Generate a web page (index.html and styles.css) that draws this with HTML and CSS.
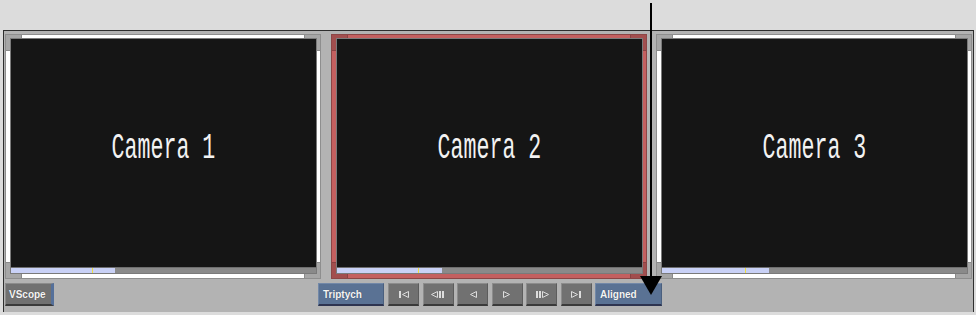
FILE: index.html
```html
<!DOCTYPE html>
<html lang="en">
<head>
  <meta charset="UTF-8" />
  <title>Triptych Viewer</title>
  <link rel="stylesheet" href="styles.css">
</head>
<body>
  <div class="panel">
    <div class="viewers">
      <div class="viewer">
        <div class="screen">
          <div class="picture"><span class="label">Camera 1</span></div>
          <div class="scrub">
            <div class="scrub-fill" style="width:34%"></div>
            <div class="scrub-tick" style="left:26.5%"></div>
          </div>
        </div>
      </div>

      <div class="viewer selected">
        <div class="screen">
          <div class="picture"><span class="label">Camera 2</span></div>
          <div class="scrub">
            <div class="scrub-fill" style="width:34.5%"></div>
            <div class="scrub-tick" style="left:26.5%"></div>
          </div>
        </div>
      </div>

      <div class="viewer">
        <div class="screen">
          <div class="picture"><span class="label">Camera 3</span></div>
          <div class="scrub">
            <div class="scrub-fill" style="width:35%"></div>
            <div class="scrub-tick" style="left:27.2%"></div>
          </div>
        </div>
      </div>
    </div>

    <div class="controls">
      <button class="btn gray vscope">VScope</button>

      <div class="transport">
        <button class="btn blue label-btn">Triptych</button>
        <!-- go to start -->
        <button class="btn gray icon-btn">
          <svg width="12" height="9" viewBox="0 0 12 9"><rect x="1" y="1" width="2" height="7"/><polygon points="10.5,1.5 4.5,4.5 10.5,7.5"/></svg>
        </button>
        <!-- step back -->
        <button class="btn gray icon-btn">
          <svg width="14" height="9" viewBox="0 0 14 9"><polygon points="6.5,1.5 0.5,4.5 6.5,7.5"/><rect x="8" y="1" width="2" height="7"/><rect x="11" y="1" width="2" height="7"/></svg>
        </button>
        <!-- play reverse -->
        <button class="btn gray icon-btn">
          <svg width="8" height="9" viewBox="0 0 8 9"><polygon points="7.5,1.5 1.5,4.5 7.5,7.5"/></svg>
        </button>
        <!-- play -->
        <button class="btn gray icon-btn">
          <svg width="8" height="9" viewBox="0 0 8 9"><polygon points="0.5,1.5 6.5,4.5 0.5,7.5"/></svg>
        </button>
        <!-- step forward -->
        <button class="btn gray icon-btn">
          <svg width="14" height="9" viewBox="0 0 14 9"><rect x="1" y="1" width="2" height="7"/><rect x="4" y="1" width="2" height="7"/><polygon points="7.5,1.5 13.5,4.5 7.5,7.5"/></svg>
        </button>
        <!-- go to end -->
        <button class="btn gray icon-btn">
          <svg width="12" height="9" viewBox="0 0 12 9"><polygon points="1.5,1.5 7.5,4.5 1.5,7.5"/><rect x="9" y="1" width="2" height="7"/></svg>
        </button>
        <button class="btn blue label-btn aligned">Aligned</button>
      </div>
    </div>
  </div>

  <div class="pointer"></div>
</body>
</html>
```

FILE: styles.css
```css
* {
  margin: 0;
  padding: 0;
  box-sizing: border-box;
}

body {
  width: 976px;
  height: 315px;
  background: #dcdcdc;
  font-family: 'Liberation Sans', Arial, sans-serif;
  overflow: hidden;
  position: relative;
}

.panel {
  margin: 30px 2px 0 3px;
  height: 282px;
  background: #b3b3b3;
  border: 1px solid #2e2e2e;
  border-bottom: none;
}

.viewers {
  display: flex;
  padding: 3px 0 0 1px;
}

/* corner blocks: a light 15px square over a darker 16px one gives the inner edge line */
.viewer {
  width: 316px;
  height: 245px;
  padding: 3px 3px 4px 4px;
  border: 1px solid #8e8e8e;
  background:
    linear-gradient(#a6a6a6, #a6a6a6) left top / 15px 15px no-repeat,
    linear-gradient(#a6a6a6, #a6a6a6) right top / 15px 15px no-repeat,
    linear-gradient(#a6a6a6, #a6a6a6) left bottom / 15px 15px no-repeat,
    linear-gradient(#a6a6a6, #a6a6a6) right bottom / 15px 15px no-repeat,
    linear-gradient(#8a8a8a, #8a8a8a) left top / 16px 16px no-repeat,
    linear-gradient(#8a8a8a, #8a8a8a) right top / 16px 16px no-repeat,
    linear-gradient(#8a8a8a, #8a8a8a) left bottom / 16px 16px no-repeat,
    linear-gradient(#8a8a8a, #8a8a8a) right bottom / 16px 16px no-repeat,
    #ffffff;
}

.viewer.selected {
  margin: 0 9px 0 10px;
  border-color: #8c4646;
  background:
    linear-gradient(#a24e4e, #a24e4e) left top / 15px 15px no-repeat,
    linear-gradient(#a24e4e, #a24e4e) right top / 15px 15px no-repeat,
    linear-gradient(#a24e4e, #a24e4e) left bottom / 15px 15px no-repeat,
    linear-gradient(#a24e4e, #a24e4e) right bottom / 15px 15px no-repeat,
    linear-gradient(#8a4242, #8a4242) left top / 16px 16px no-repeat,
    linear-gradient(#8a4242, #8a4242) right top / 16px 16px no-repeat,
    linear-gradient(#8a4242, #8a4242) left bottom / 16px 16px no-repeat,
    linear-gradient(#8a4242, #8a4242) right bottom / 16px 16px no-repeat,
    #c46060;
}

.screen {
  height: 100%;
  display: flex;
  flex-direction: column;
  background: #151515;
  border: 1px solid #7a7a7a;
}

.picture {
  flex: 1;
  display: flex;
  align-items: center;
  justify-content: center;
  padding-bottom: 10px;
}

.label {
  font-family: 'Liberation Mono', 'DejaVu Sans Mono', monospace;
  font-size: 36px;
  color: #f2f2f2;
  transform: scaleX(0.6);
  white-space: nowrap;
}

.scrub {
  height: 6px;
  position: relative;
  background: #8a8a8a;
  border-top: 1px solid #6e6e6e;
}

.scrub-fill {
  height: 100%;
  background: #c9d1f6;
}

.scrub-tick {
  position: absolute;
  top: 0;
  width: 1px;
  height: 100%;
  background: #f0e040;
}

.controls {
  display: flex;
  margin-top: 4px;
  padding-left: 1px;
}

.transport {
  display: flex;
  gap: 3.5px;
  margin-left: 264px;
}

.btn {
  height: 23px;
  font-family: 'Liberation Sans', Arial, sans-serif;
  font-size: 10px;
  font-weight: bold;
  color: #f4f4f4;
  text-shadow: 0 0 1px rgba(0, 0, 0, 0.4);
  cursor: pointer;
  display: flex;
  align-items: center;
}

.btn.gray {
  background: #717171;
  border-top: 1px solid #8c8c8c;
  border-left: 1px solid #8c8c8c;
  border-right: 1px solid #5c5c5c;
  border-bottom: 2px solid #3a3a3a;
}

.btn.blue {
  background: #5a7294;
  border-top: 1px solid #7288a8;
  border-left: 1px solid #7288a8;
  border-right: 1px solid #4a5f7e;
  border-bottom: 2px solid #2e3450;
}

.vscope {
  width: 49px;
  padding-left: 3px;
  border-right: 3px solid #55709a !important;
}

.label-btn {
  width: 66px;
  padding-left: 4px;
  margin-right: 0.5px;
}

.aligned {
  width: 67px;
  margin-right: 0;
}

.icon-btn {
  width: 31px;
  justify-content: center;
}

.icon-btn svg rect {
  fill: #dcdcdc;
}

.icon-btn svg polygon {
  fill: none;
  stroke: #dcdcdc;
  stroke-width: 1;
}

.pointer {
  position: absolute;
  left: 650px;
  top: 3px;
  width: 2px;
  height: 275px;
  background: #000;
}

.pointer::after {
  content: '';
  position: absolute;
  left: -10px;
  top: 273px;
  border-left: 11px solid transparent;
  border-right: 11px solid transparent;
  border-top: 19px solid #000;
}
```
